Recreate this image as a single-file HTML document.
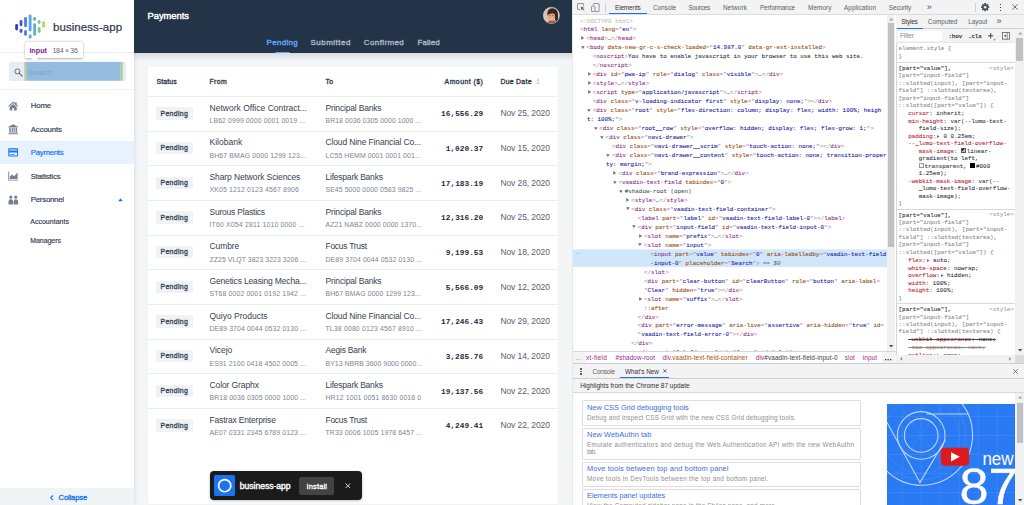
<!DOCTYPE html>
<html lang="en"><head><meta charset="utf-8"><title>business-app</title>
<style>
html,body{margin:0;padding:0;}
html{overflow:hidden;width:1024px;height:505px;}
body{width:1024px;height:505px;overflow:hidden;position:relative;background:#fff;font-family:"Liberation Sans",sans-serif;}
.t{position:absolute;white-space:pre;}
.b{position:absolute;box-sizing:border-box;}
svg{position:absolute;overflow:visible;}
#r{position:absolute;left:0;top:0;width:1024px;height:505px;overflow:hidden;}
</style></head><body><div id="r">
<div class="b" style="left:134px;top:0px;width:438px;height:505px;background:#f3f5f7;"></div>
<div class="b" style="left:134px;top:0px;width:438px;height:53px;background:#233348;"></div>
<span id="t1" class="t" style="top:10px;font:400 9.4px/11px 'Liberation Sans',sans-serif;color:#ffffff;left:147.50px;letter-spacing:-0.023px;-webkit-text-stroke:0.42px #ffffff;">Payments</span>
<svg style="left:542.6px;top:6.5px" width="16.8" height="16.8" viewBox="0 0 16.8 16.8">
<defs><clipPath id="av"><circle cx="8.4" cy="8.4" r="8.2"/></clipPath></defs>
<g clip-path="url(#av)">
<rect width="16.8" height="16.8" fill="#dcc2b5"/>
<path d="M4.2 16.8 Q5 13 9 13.2 Q13.4 13 14.6 16.8Z" fill="#a54d30"/>
<path d="M4.4 8.6 Q3.6 1.6 9.4 1.2 Q15 1.4 15 8 L15.2 13.4 Q13.6 15 12.2 13.2 L11.6 7 Q8 4.6 5.4 8 Z" fill="#3a2621"/>
<path d="M5 8.4 Q5 5.6 8.2 5.4 Q11.8 5.4 12 8.6 Q12 12.4 10 13.9 Q8.4 14.8 6.8 13.6 Q5 11.8 5 8.4Z" fill="#dba583"/>
<path d="M4.6 7.6 Q6.4 3.8 10.4 4.6 Q12.6 5.2 12.4 8 Q10.6 5.8 8.6 6.4 Q6.2 6.8 4.6 7.6Z" fill="#3a2621"/>
<path d="M6.7 11.1 Q8.5 12.7 10.3 11 Q8.5 11.7 6.7 11.1Z" fill="#fff"/>
<path d="M6.4 8.6h1.3v0.5H6.4z M9.3 8.6h1.3v0.5H9.3z" fill="#4a2f26"/>
</g>
<circle cx="8.4" cy="8.4" r="8.1" fill="none" stroke="#e2cfc5" stroke-width="0.5"/>
</svg>
<div class="b" style="left:134px;top:53px;width:438px;height:8px;background:linear-gradient(rgba(35,51,72,.13),rgba(35,51,72,0));"></div>
<span id="t2" class="t" style="top:38px;font:400 8.0px/9px 'Liberation Sans',sans-serif;color:#62a3ff;left:266.60px;letter-spacing:0.277px;-webkit-text-stroke:0.36px #62a3ff;">Pending</span>
<span id="t3" class="t" style="top:38px;font:400 8.0px/9px 'Liberation Sans',sans-serif;color:#aeb8c6;left:310.50px;letter-spacing:0.485px;-webkit-text-stroke:0.36px #aeb8c6;">Submitted</span>
<span id="t4" class="t" style="top:38px;font:400 8.0px/9px 'Liberation Sans',sans-serif;color:#aeb8c6;left:363.80px;letter-spacing:0.388px;-webkit-text-stroke:0.36px #aeb8c6;">Confirmed</span>
<span id="t5" class="t" style="top:38px;font:400 8.0px/9px 'Liberation Sans',sans-serif;color:#aeb8c6;left:417.50px;letter-spacing:0.084px;-webkit-text-stroke:0.36px #aeb8c6;">Failed</span>
<div class="b" style="left:274.6px;top:51.6px;width:15.2px;height:1.4px;background:#62a3ff;border-radius:1px 1px 0 0;"></div>
<svg style="left:0;top:0" width="572" height="505" viewBox="0 0 572 505"><rect x="147.6" y="66.3" width="410.8" height="438" rx="1.6" fill="#fff" stroke="#e9ecef" stroke-width="0.5"/></svg>
<span id="t6" class="t" style="top:78px;font:400 6.9px/7px 'Liberation Sans',sans-serif;color:#2b3749;left:156.50px;letter-spacing:0.126px;-webkit-text-stroke:0.31px #2b3749;">Status</span>
<span id="t7" class="t" style="top:78px;font:400 6.9px/7px 'Liberation Sans',sans-serif;color:#2b3749;left:209.50px;letter-spacing:0.355px;-webkit-text-stroke:0.31px #2b3749;">From</span>
<span id="t8" class="t" style="top:78px;font:400 6.9px/7px 'Liberation Sans',sans-serif;color:#2b3749;left:325.50px;letter-spacing:0.259px;-webkit-text-stroke:0.31px #2b3749;">To</span>
<span id="t9" class="t" style="top:78px;font:400 6.9px/7px 'Liberation Sans',sans-serif;color:#2b3749;right:540.80px;letter-spacing:0.451px;-webkit-text-stroke:0.31px #2b3749;">Amount ($)</span>
<span id="t10" class="t" style="top:78px;font:400 6.9px/7px 'Liberation Sans',sans-serif;color:#2b3749;left:500.40px;letter-spacing:0.284px;-webkit-text-stroke:0.31px #2b3749;">Due Date</span>
<svg style="left:536.4px;top:78px" width="4" height="7" viewBox="0 0 4 7"><path d="M0.3 2.8 L2 0.6 L3.7 2.8Z M0.3 4.2 L2 6.4 L3.7 4.2Z" fill="#c3c9d2"/></svg>
<div class="b" style="left:148px;top:96.0px;width:410px;height:0.6px;background:#eceef1;"></div>
<div class="b" style="left:156.2px;top:107.2px;width:36.4px;height:12.6px;background:#f0f2f5;border-radius:2px;"></div>
<span id="t11" class="t" style="top:110px;font:400 6.9px/7px 'Liberation Sans',sans-serif;color:#3a4657;left:160.50px;letter-spacing:0.329px;-webkit-text-stroke:0.31px #3a4657;">Pending</span>
<span id="t12" class="t" style="top:103px;font:400 8.5px/10px 'Liberation Sans',sans-serif;color:#36424f;left:209.50px;letter-spacing:0.013px;">Network Office Contract...</span>
<span id="t13" class="t" style="top:117px;font:400 6.9px/7px 'Liberation Sans',sans-serif;color:#7b8591;left:209.50px;letter-spacing:0.109px;">LB62 0999 0000 0001 0019 ...</span>
<span id="t14" class="t" style="top:103px;font:400 8.5px/10px 'Liberation Sans',sans-serif;color:#36424f;left:325.50px;letter-spacing:-0.180px;">Principal Banks</span>
<span id="t15" class="t" style="top:117px;font:400 6.9px/7px 'Liberation Sans',sans-serif;color:#7b8591;left:325.50px;letter-spacing:0.069px;">BR18 0036 0305 0000 1000 ...</span>
<span id="t16" class="t" style="top:110px;font:700 7.8px/8px 'Liberation Mono',monospace;color:#1f2b3d;right:540.80px;letter-spacing:-0.001px;">16,556.29</span>
<span id="t17" class="t" style="top:108px;font:400 8.5px/10px 'Liberation Sans',sans-serif;color:#56616f;left:500.40px;letter-spacing:-0.090px;">Nov 25, 2020</span>
<div class="b" style="left:148px;top:130.67px;width:410px;height:0.6px;background:#ebeef1;"></div>
<div class="b" style="left:156.2px;top:141.87px;width:36.4px;height:12.6px;background:#f0f2f5;border-radius:2px;"></div>
<span id="t18" class="t" style="top:144px;font:400 6.9px/7px 'Liberation Sans',sans-serif;color:#3a4657;left:160.50px;letter-spacing:0.329px;-webkit-text-stroke:0.31px #3a4657;">Pending</span>
<span id="t19" class="t" style="top:137px;font:400 8.5px/10px 'Liberation Sans',sans-serif;color:#36424f;left:209.50px;letter-spacing:0.011px;">Kilobank</span>
<span id="t20" class="t" style="top:152px;font:400 6.9px/7px 'Liberation Sans',sans-serif;color:#7b8591;left:209.50px;letter-spacing:0.139px;">BH67 BMAG 0000 1299 123...</span>
<span id="t21" class="t" style="top:137px;font:400 8.5px/10px 'Liberation Sans',sans-serif;color:#36424f;left:325.50px;letter-spacing:-0.129px;">Cloud Nine Financial Co...</span>
<span id="t22" class="t" style="top:152px;font:400 6.9px/7px 'Liberation Sans',sans-serif;color:#7b8591;left:325.50px;letter-spacing:0.089px;">LC55 HEMM 0001 0001 001...</span>
<span id="t23" class="t" style="top:145px;font:700 7.8px/8px 'Liberation Mono',monospace;color:#1f2b3d;right:540.80px;letter-spacing:0.000px;">1,020.37</span>
<span id="t24" class="t" style="top:143px;font:400 8.5px/10px 'Liberation Sans',sans-serif;color:#56616f;left:500.40px;letter-spacing:-0.090px;">Nov 15, 2020</span>
<div class="b" style="left:148px;top:165.33999999999997px;width:410px;height:0.6px;background:#ebeef1;"></div>
<div class="b" style="left:156.2px;top:176.54px;width:36.4px;height:12.6px;background:#f0f2f5;border-radius:2px;"></div>
<span id="t25" class="t" style="top:179px;font:400 6.9px/7px 'Liberation Sans',sans-serif;color:#3a4657;left:160.50px;letter-spacing:0.329px;-webkit-text-stroke:0.31px #3a4657;">Pending</span>
<span id="t26" class="t" style="top:172px;font:400 8.5px/10px 'Liberation Sans',sans-serif;color:#36424f;left:209.50px;letter-spacing:-0.108px;">Sharp Network Sciences</span>
<span id="t27" class="t" style="top:186px;font:400 6.9px/7px 'Liberation Sans',sans-serif;color:#7b8591;left:209.50px;letter-spacing:0.148px;">XK05 1212 0123 4567 8906</span>
<span id="t28" class="t" style="top:172px;font:400 8.5px/10px 'Liberation Sans',sans-serif;color:#36424f;left:325.50px;letter-spacing:-0.219px;">Lifespark Banks</span>
<span id="t29" class="t" style="top:186px;font:400 6.9px/7px 'Liberation Sans',sans-serif;color:#7b8591;left:325.50px;letter-spacing:0.082px;">SE45 5000 0000 0583 9825 ...</span>
<span id="t30" class="t" style="top:180px;font:700 7.8px/8px 'Liberation Mono',monospace;color:#1f2b3d;right:540.80px;letter-spacing:-0.001px;">17,183.19</span>
<span id="t31" class="t" style="top:178px;font:400 8.5px/10px 'Liberation Sans',sans-serif;color:#56616f;left:500.40px;letter-spacing:-0.090px;">Nov 28, 2020</span>
<div class="b" style="left:148px;top:200.01px;width:410px;height:0.6px;background:#ebeef1;"></div>
<div class="b" style="left:156.2px;top:211.21px;width:36.4px;height:12.6px;background:#f0f2f5;border-radius:2px;"></div>
<span id="t32" class="t" style="top:214px;font:400 6.9px/7px 'Liberation Sans',sans-serif;color:#3a4657;left:160.50px;letter-spacing:0.329px;-webkit-text-stroke:0.31px #3a4657;">Pending</span>
<span id="t33" class="t" style="top:207px;font:400 8.5px/10px 'Liberation Sans',sans-serif;color:#36424f;left:209.50px;letter-spacing:-0.213px;">Surous Plastics</span>
<span id="t34" class="t" style="top:221px;font:400 6.9px/7px 'Liberation Sans',sans-serif;color:#7b8591;left:209.50px;letter-spacing:0.169px;">IT60 X054 2811 1010 0000 ...</span>
<span id="t35" class="t" style="top:207px;font:400 8.5px/10px 'Liberation Sans',sans-serif;color:#36424f;left:325.50px;letter-spacing:-0.180px;">Principal Banks</span>
<span id="t36" class="t" style="top:221px;font:400 6.9px/7px 'Liberation Sans',sans-serif;color:#7b8591;left:325.50px;letter-spacing:0.091px;">AZ21 NABZ 0000 0000 1370...</span>
<span id="t37" class="t" style="top:214px;font:700 7.8px/8px 'Liberation Mono',monospace;color:#1f2b3d;right:540.80px;letter-spacing:-0.001px;">12,316.20</span>
<span id="t38" class="t" style="top:212px;font:400 8.5px/10px 'Liberation Sans',sans-serif;color:#56616f;left:500.40px;letter-spacing:-0.090px;">Nov 25, 2020</span>
<div class="b" style="left:148px;top:234.68px;width:410px;height:0.6px;background:#ebeef1;"></div>
<div class="b" style="left:156.2px;top:245.88000000000002px;width:36.4px;height:12.6px;background:#f0f2f5;border-radius:2px;"></div>
<span id="t39" class="t" style="top:248px;font:400 6.9px/7px 'Liberation Sans',sans-serif;color:#3a4657;left:160.50px;letter-spacing:0.329px;-webkit-text-stroke:0.31px #3a4657;">Pending</span>
<span id="t40" class="t" style="top:241px;font:400 8.5px/10px 'Liberation Sans',sans-serif;color:#36424f;left:209.50px;letter-spacing:-0.089px;">Cumbre</span>
<span id="t41" class="t" style="top:256px;font:400 6.9px/7px 'Liberation Sans',sans-serif;color:#7b8591;left:209.50px;letter-spacing:0.051px;">ZZ25 VLQT 3823 3223 3206 ...</span>
<span id="t42" class="t" style="top:241px;font:400 8.5px/10px 'Liberation Sans',sans-serif;color:#36424f;left:325.50px;letter-spacing:-0.282px;">Focus Trust</span>
<span id="t43" class="t" style="top:256px;font:400 6.9px/7px 'Liberation Sans',sans-serif;color:#7b8591;left:325.50px;letter-spacing:0.101px;">DE89 3704 0044 0532 0130 ...</span>
<span id="t44" class="t" style="top:249px;font:700 7.8px/8px 'Liberation Mono',monospace;color:#1f2b3d;right:540.80px;letter-spacing:0.000px;">9,199.53</span>
<span id="t45" class="t" style="top:247px;font:400 8.5px/10px 'Liberation Sans',sans-serif;color:#56616f;left:500.40px;letter-spacing:-0.090px;">Nov 18, 2020</span>
<div class="b" style="left:148px;top:269.35px;width:410px;height:0.6px;background:#ebeef1;"></div>
<div class="b" style="left:156.2px;top:280.55px;width:36.4px;height:12.6px;background:#f0f2f5;border-radius:2px;"></div>
<span id="t46" class="t" style="top:283px;font:400 6.9px/7px 'Liberation Sans',sans-serif;color:#3a4657;left:160.50px;letter-spacing:0.329px;-webkit-text-stroke:0.31px #3a4657;">Pending</span>
<span id="t47" class="t" style="top:276px;font:400 8.5px/10px 'Liberation Sans',sans-serif;color:#36424f;left:209.50px;letter-spacing:-0.158px;">Genetics Leasing Mecha...</span>
<span id="t48" class="t" style="top:290px;font:400 6.9px/7px 'Liberation Sans',sans-serif;color:#7b8591;left:209.50px;letter-spacing:0.128px;">ST68 0002 0001 0192 1942 ...</span>
<span id="t49" class="t" style="top:276px;font:400 8.5px/10px 'Liberation Sans',sans-serif;color:#36424f;left:325.50px;letter-spacing:-0.180px;">Principal Banks</span>
<span id="t50" class="t" style="top:290px;font:400 6.9px/7px 'Liberation Sans',sans-serif;color:#7b8591;left:325.50px;letter-spacing:0.089px;">BH67 BMAG 0000 1299 123...</span>
<span id="t51" class="t" style="top:284px;font:700 7.8px/8px 'Liberation Mono',monospace;color:#1f2b3d;right:540.80px;letter-spacing:0.000px;">5,566.09</span>
<span id="t52" class="t" style="top:282px;font:400 8.5px/10px 'Liberation Sans',sans-serif;color:#56616f;left:500.40px;letter-spacing:-0.090px;">Nov 12, 2020</span>
<div class="b" style="left:148px;top:304.02px;width:410px;height:0.6px;background:#ebeef1;"></div>
<div class="b" style="left:156.2px;top:315.21999999999997px;width:36.4px;height:12.6px;background:#f0f2f5;border-radius:2px;"></div>
<span id="t53" class="t" style="top:318px;font:400 6.9px/7px 'Liberation Sans',sans-serif;color:#3a4657;left:160.50px;letter-spacing:0.329px;-webkit-text-stroke:0.31px #3a4657;">Pending</span>
<span id="t54" class="t" style="top:311px;font:400 8.5px/10px 'Liberation Sans',sans-serif;color:#36424f;left:209.50px;letter-spacing:-0.009px;">Quiyo Products</span>
<span id="t55" class="t" style="top:325px;font:400 6.9px/7px 'Liberation Sans',sans-serif;color:#7b8591;left:209.50px;letter-spacing:0.101px;">DE89 3704 0044 0532 0130 ...</span>
<span id="t56" class="t" style="top:311px;font:400 8.5px/10px 'Liberation Sans',sans-serif;color:#36424f;left:325.50px;letter-spacing:-0.129px;">Cloud Nine Financial Co...</span>
<span id="t57" class="t" style="top:325px;font:400 6.9px/7px 'Liberation Sans',sans-serif;color:#7b8591;left:325.50px;letter-spacing:0.156px;">TL38 0080 0123 4567 8910 ...</span>
<span id="t58" class="t" style="top:318px;font:700 7.8px/8px 'Liberation Mono',monospace;color:#1f2b3d;right:540.80px;letter-spacing:-0.001px;">17,246.43</span>
<span id="t59" class="t" style="top:316px;font:400 8.5px/10px 'Liberation Sans',sans-serif;color:#56616f;left:500.40px;letter-spacing:-0.090px;">Nov 29, 2020</span>
<div class="b" style="left:148px;top:338.69px;width:410px;height:0.6px;background:#ebeef1;"></div>
<div class="b" style="left:156.2px;top:349.89px;width:36.4px;height:12.6px;background:#f0f2f5;border-radius:2px;"></div>
<span id="t60" class="t" style="top:352px;font:400 6.9px/7px 'Liberation Sans',sans-serif;color:#3a4657;left:160.50px;letter-spacing:0.329px;-webkit-text-stroke:0.31px #3a4657;">Pending</span>
<span id="t61" class="t" style="top:345px;font:400 8.5px/10px 'Liberation Sans',sans-serif;color:#36424f;left:209.50px;letter-spacing:-0.033px;">Vicejo</span>
<span id="t62" class="t" style="top:360px;font:400 6.9px/7px 'Liberation Sans',sans-serif;color:#7b8591;left:209.50px;letter-spacing:0.114px;">ES91 2100 0418 4502 0005 ...</span>
<span id="t63" class="t" style="top:345px;font:400 8.5px/10px 'Liberation Sans',sans-serif;color:#36424f;left:325.50px;letter-spacing:-0.220px;">Aegis Bank</span>
<span id="t64" class="t" style="top:360px;font:400 6.9px/7px 'Liberation Sans',sans-serif;color:#7b8591;left:325.50px;letter-spacing:0.048px;">BY13 NBRB 3600 9000 0000...</span>
<span id="t65" class="t" style="top:353px;font:700 7.8px/8px 'Liberation Mono',monospace;color:#1f2b3d;right:540.80px;letter-spacing:0.000px;">3,285.76</span>
<span id="t66" class="t" style="top:351px;font:400 8.5px/10px 'Liberation Sans',sans-serif;color:#56616f;left:500.40px;letter-spacing:-0.090px;">Nov 14, 2020</span>
<div class="b" style="left:148px;top:373.36px;width:410px;height:0.6px;background:#ebeef1;"></div>
<div class="b" style="left:156.2px;top:384.56px;width:36.4px;height:12.6px;background:#f0f2f5;border-radius:2px;"></div>
<span id="t67" class="t" style="top:387px;font:400 6.9px/7px 'Liberation Sans',sans-serif;color:#3a4657;left:160.50px;letter-spacing:0.329px;-webkit-text-stroke:0.31px #3a4657;">Pending</span>
<span id="t68" class="t" style="top:380px;font:400 8.5px/10px 'Liberation Sans',sans-serif;color:#36424f;left:209.50px;letter-spacing:-0.097px;">Color Graphx</span>
<span id="t69" class="t" style="top:394px;font:400 6.9px/7px 'Liberation Sans',sans-serif;color:#7b8591;left:209.50px;letter-spacing:0.101px;">BR18 0036 0305 0000 1000 ...</span>
<span id="t70" class="t" style="top:380px;font:400 8.5px/10px 'Liberation Sans',sans-serif;color:#36424f;left:325.50px;letter-spacing:-0.219px;">Lifespark Banks</span>
<span id="t71" class="t" style="top:394px;font:400 6.9px/7px 'Liberation Sans',sans-serif;color:#7b8591;left:325.50px;letter-spacing:0.133px;">HR12 1001 0051 8630 0016 0</span>
<span id="t72" class="t" style="top:388px;font:700 7.8px/8px 'Liberation Mono',monospace;color:#1f2b3d;right:540.80px;letter-spacing:-0.001px;">19,137.56</span>
<span id="t73" class="t" style="top:386px;font:400 8.5px/10px 'Liberation Sans',sans-serif;color:#56616f;left:500.40px;letter-spacing:-0.090px;">Nov 22, 2020</span>
<div class="b" style="left:148px;top:408.03000000000003px;width:410px;height:0.6px;background:#ebeef1;"></div>
<div class="b" style="left:156.2px;top:419.23px;width:36.4px;height:12.6px;background:#f0f2f5;border-radius:2px;"></div>
<span id="t74" class="t" style="top:422px;font:400 6.9px/7px 'Liberation Sans',sans-serif;color:#3a4657;left:160.50px;letter-spacing:0.329px;-webkit-text-stroke:0.31px #3a4657;">Pending</span>
<span id="t75" class="t" style="top:415px;font:400 8.5px/10px 'Liberation Sans',sans-serif;color:#36424f;left:209.50px;letter-spacing:-0.181px;">Fastrax Enterprise</span>
<span id="t76" class="t" style="top:429px;font:400 6.9px/7px 'Liberation Sans',sans-serif;color:#7b8591;left:209.50px;letter-spacing:0.114px;">AE07 0331 2345 6789 0123 ...</span>
<span id="t77" class="t" style="top:415px;font:400 8.5px/10px 'Liberation Sans',sans-serif;color:#36424f;left:325.50px;letter-spacing:-0.282px;">Focus Trust</span>
<span id="t78" class="t" style="top:429px;font:400 6.9px/7px 'Liberation Sans',sans-serif;color:#7b8591;left:325.50px;letter-spacing:0.115px;">TR33 0006 1005 1978 6457 ...</span>
<span id="t79" class="t" style="top:422px;font:700 7.8px/8px 'Liberation Mono',monospace;color:#1f2b3d;right:540.80px;letter-spacing:0.000px;">4,249.41</span>
<span id="t80" class="t" style="top:420px;font:400 8.5px/10px 'Liberation Sans',sans-serif;color:#56616f;left:500.40px;letter-spacing:-0.090px;">Nov 22, 2020</span>
<div class="b" style="left:209.6px;top:471px;width:152.4px;height:29.4px;background:#1b1b1b;border-radius:4px;box-shadow:0 1px 3px rgba(0,0,0,.25);"></div>
<div class="b" style="left:213.9px;top:475.2px;width:21.4px;height:21.3px;background:#1a73f0;border-radius:1.5px;"></div>
<svg style="left:213.9px;top:475.2px" width="21.4" height="21.3" viewBox="0 0 21.4 21.3"><circle cx="10.7" cy="10.65" r="6.1" fill="none" stroke="#fff" stroke-width="1.7"/></svg>
<span id="t81" class="t" style="top:481px;font:400 8.6px/10px 'Liberation Sans',sans-serif;color:#ffffff;left:239.80px;letter-spacing:-0.027px;-webkit-text-stroke:0.39px #ffffff;">business-app</span>
<div class="b" style="left:299.2px;top:477px;width:35.2px;height:18px;background:#434343;border-radius:2px;"></div>
<span id="t82" class="t" style="top:482px;font:400 7.4px/9px 'Liberation Sans',sans-serif;color:#ffffff;left:306.50px;letter-spacing:0.184px;-webkit-text-stroke:0.33px #ffffff;">Install</span>
<svg style="left:344.6px;top:483.4px" width="5.6" height="5.6" viewBox="0 0 5.6 5.6"><path d="M0.5 0.5 L5.1 5.1 M5.1 0.5 L0.5 5.1" stroke="#e8e8e8" stroke-width="0.9" fill="none"/></svg>
<div class="b" style="left:0px;top:0px;width:134px;height:505px;background:#ffffff;box-shadow:0.5px 0 3.5px rgba(30,50,80,.16);"></div>
<svg style="left:0;top:0" width="60" height="50" viewBox="0 0 60 50"><rect x="15.20" y="24.00" width="2.85" height="6.50" rx="1.42" fill="#4036b6"/><rect x="19.60" y="20.10" width="2.85" height="6.10" rx="1.42" fill="#4559d0"/><rect x="19.60" y="28.70" width="2.85" height="4.20" rx="1.42" fill="#4559d0"/><rect x="24.10" y="17.10" width="2.85" height="10.10" rx="1.42" fill="#4a80e6"/><rect x="24.10" y="30.10" width="2.85" height="5.70" rx="1.42" fill="#4a80e6"/><rect x="28.70" y="14.40" width="2.85" height="17.10" rx="1.42" fill="#57a5fa"/><rect x="28.70" y="34.40" width="2.85" height="4.20" rx="1.42" fill="#57a5fa"/><rect x="33.20" y="17.10" width="2.85" height="3.70" rx="1.42" fill="#5db1c4"/><rect x="33.20" y="23.30" width="2.85" height="12.50" rx="1.42" fill="#5db1c4"/><rect x="37.70" y="20.10" width="2.85" height="3.90" rx="1.42" fill="#7bca8d"/><rect x="37.70" y="26.90" width="2.85" height="6.00" rx="1.42" fill="#7bca8d"/><rect x="42.20" y="21.20" width="2.85" height="6.40" rx="1.42" fill="#a4e25a"/></svg>
<span id="t83" class="t" style="top:21px;font:400 11.5px/12px 'Liberation Sans',sans-serif;color:#2c3a4c;left:53.00px;letter-spacing:0.066px;-webkit-text-stroke:0.22px #2c3a4c;">business-app</span>
<div class="b" style="left:0px;top:52px;width:134px;height:0.7px;background:#eef1f4;"></div>
<div class="b" style="left:8.5px;top:62px;width:117px;height:19px;background:#e8ebef;border-radius:2px;"></div>
<svg style="left:13.6px;top:67.6px" width="9" height="9" viewBox="0 0 9 9"><circle cx="3.4" cy="3.4" r="2.5" fill="none" stroke="#5d6a7a" stroke-width="0.95"/><path d="M5.3 5.3 L8.2 8.2" stroke="#5d6a7a" stroke-width="1.1" stroke-linecap="round"/></svg>
<svg style="left:0;top:0" width="134" height="90" viewBox="0 0 134 90"><rect x="24.4" y="61.9" width="2.4" height="18.8" fill="#abce9e"/><rect x="26.7" y="61.9" width="93.7" height="18.8" fill="#95bbe1"/><rect x="120.3" y="61.9" width="2.4" height="18.8" fill="#abce9e"/></svg>
<span id="t84" class="t" style="top:68px;font:400 7.6px/9px 'Liberation Sans',sans-serif;color:#7fa2cc;left:27.20px;letter-spacing:0.090px;">Search</span>
<div class="b" style="left:0px;top:89px;width:134px;height:0.7px;background:#eef1f4;"></div>
<div class="b" style="left:25px;top:42px;width:57.6px;height:16px;background:#ffffff;border-radius:1.5px;box-shadow:0 0.5px 2.5px rgba(0,0,0,.33);"></div>
<svg style="left:31.4px;top:57.8px" width="7" height="4" viewBox="0 0 7 4"><path d="M0 0 L3.5 3.4 L7 0Z" fill="#fff"/><path d="M0 0.2 L3.5 3.5 L7 0.2" fill="none" stroke="rgba(0,0,0,.12)" stroke-width="0.4"/></svg>
<span id="t85" class="t" style="top:46px;font:700 7.2px/9px 'Liberation Sans',sans-serif;color:#881280;left:29.40px;letter-spacing:-0.013px;">input</span>
<span id="t86" class="t" style="top:47px;font:400 7.0px/7px 'Liberation Sans',sans-serif;color:#666666;left:52.50px;letter-spacing:-0.307px;">184 × 36</span>
<div class="b" style="left:0px;top:140.9px;width:134px;height:23.3px;background:#e8f1fe;"></div>
<span id="t87" class="t" style="top:101px;font:400 7.8px/9px 'Liberation Sans',sans-serif;color:#364254;left:30.80px;letter-spacing:-0.128px;-webkit-text-stroke:0.20px #364254;">Home</span>
<span id="t88" class="t" style="top:125px;font:400 7.8px/9px 'Liberation Sans',sans-serif;color:#364254;left:30.80px;letter-spacing:-0.135px;-webkit-text-stroke:0.20px #364254;">Accounts</span>
<span id="t89" class="t" style="top:148px;font:400 7.8px/9px 'Liberation Sans',sans-serif;color:#1676f3;left:30.80px;letter-spacing:-0.259px;-webkit-text-stroke:0.20px #1676f3;">Payments</span>
<span id="t90" class="t" style="top:172px;font:400 7.8px/9px 'Liberation Sans',sans-serif;color:#364254;left:30.80px;letter-spacing:-0.160px;-webkit-text-stroke:0.20px #364254;">Statistics</span>
<span id="t91" class="t" style="top:195px;font:400 7.8px/9px 'Liberation Sans',sans-serif;color:#364254;left:30.80px;letter-spacing:-0.234px;-webkit-text-stroke:0.20px #364254;">Personnel</span>
<span id="t92" class="t" style="top:218px;font:400 7px/7px 'Liberation Sans',sans-serif;color:#364254;left:30.20px;letter-spacing:0.024px;-webkit-text-stroke:0.18px #364254;">Accountants</span>
<span id="t93" class="t" style="top:237px;font:400 7px/7px 'Liberation Sans',sans-serif;color:#364254;left:30.20px;letter-spacing:-0.055px;-webkit-text-stroke:0.18px #364254;">Managers</span>
<svg style="left:8.2px;top:100.6px" width="10.4" height="10" viewBox="0 0 10.4 10"><path d="M5.2 0.6 L0.3 5 L1.1 5.7 L5.2 2.1 L9.3 5.7 L10.1 5 L8.6 3.6 L8.6 1.1 L7.3 1.1 L7.3 2.5 Z" fill="#758190"/><path d="M5.2 2.9 L1.7 6 L1.7 9.6 L4.3 9.6 L4.3 7 L6.1 7 L6.1 9.6 L8.7 9.6 L8.7 6 Z" fill="#758190"/></svg>
<svg style="left:8.2px;top:124px" width="10.4" height="10.4" viewBox="0 0 10.4 10.4"><path d="M5.2 0.3 L0.4 2.7 L0.4 3.5 L10 3.5 L10 2.7 Z" fill="#758190"/><path d="M1.3 4.1h1.5v4H1.3z M3.7 4.1h1.2v4H3.7z M5.6 4.1h1.2v4H5.6z M7.6 4.1h1.5v4H7.6z" fill="#758190"/><path d="M0.9 8.5h8.6v0.7H0.9z M0.3 9.5h9.8v0.8H0.3z" fill="#758190"/></svg>
<svg style="left:8.2px;top:148.2px" width="10.4" height="8.8" viewBox="0 0 10.4 8.8"><path d="M1 0.3 H9.4 Q10.1 0.3 10.1 1 V7.8 Q10.1 8.5 9.4 8.5 H1 Q0.3 8.5 0.3 7.8 V1 Q0.3 0.3 1 0.3Z M1.3 1.5 V2.6 H9.1 V1.5Z M1.3 4.4 V7.4 H9.1 V4.4Z" fill="#1676f3" fill-rule="evenodd"/><path d="M2 6.1h1.6v0.7H2z M4.2 6.1h2.4v0.7H4.2z" fill="#1676f3"/></svg>
<svg style="left:8.2px;top:171.4px" width="10.6" height="9.6" viewBox="0 0 10.6 9.6"><path d="M0.3 0.6h0.9v8.1h9.1v0.8H0.3z" fill="#758190"/><path d="M1.8 8.1 L1.8 5.6 L4 3.6 L6 5.2 L9.6 1.6 L9.6 8.1Z" fill="#758190"/></svg>
<svg style="left:8.2px;top:194.6px" width="10.6" height="10" viewBox="0 0 10.6 10"><circle cx="2.8" cy="2.1" r="1.6" fill="#758190"/><circle cx="7.8" cy="2.1" r="1.6" fill="#758190"/><path d="M0.5 9.6 V6.4 Q0.5 4.3 2.8 4.3 Q5.1 4.3 5.1 6.4 V9.6Z M5.6 9.6 V6.4 Q5.6 4.3 7.8 4.3 Q10.1 4.3 10.1 6.4 V9.6Z" fill="#758190"/></svg>
<svg style="left:118.1px;top:198.1px" width="5" height="3.5" viewBox="0 0 4 3"><path d="M0 2.8 L2 0.2 L4 2.8Z" fill="#1676f3"/></svg>
<div class="b" style="left:0px;top:488px;width:134px;height:17px;background:#f1f4f7;"></div>
<svg style="left:49.8px;top:494.6px" width="3.6" height="5.6" viewBox="0 0 3.6 5.6"><path d="M3 0.5 L0.7 2.8 L3 5.1" stroke="#1676f3" stroke-width="1.1" fill="none"/></svg>
<span id="t94" class="t" style="top:493px;font:400 7.5px/9px 'Liberation Sans',sans-serif;color:#1676f3;left:58.60px;letter-spacing:-0.098px;-webkit-text-stroke:0.34px #1676f3;">Collapse</span>
<div class="b" style="left:572px;top:0px;width:452px;height:505px;background:#ffffff;"></div>
<svg style="left:572px;top:249px" width="315.4" height="18" viewBox="0 0 315.4 18"><rect x="0" y="0.4" width="315.4" height="17.5" fill="#d0e6fb"/></svg>
<span id="t95" class="t" style="top:18px;font:400 5.86px/7px 'Liberation Mono',monospace;color:#303942;left:580.00px;-webkit-text-stroke:0.09px;"><span style="color:#bdbdbd;">&lt;!DOCTYPE html&gt;</span></span>
<span id="t96" class="t" style="top:26px;font:400 5.86px/7px 'Liberation Mono',monospace;color:#303942;left:580.00px;-webkit-text-stroke:0.09px;"><span style="color:#a894a6;">&lt;</span><span style="color:#8f2d88;">html</span> <span style="color:#9a4a0c;">lang</span><span style="color:#a894a6;">=</span><span style="color:#a894a6;">"</span><span style="color:#2222a8;">en</span><span style="color:#a894a6;">"</span><span style="color:#a894a6;">&gt;</span></span>
<span id="t97" class="t" style="top:35px;font:400 5.86px/7px 'Liberation Mono',monospace;color:#303942;left:586.40px;-webkit-text-stroke:0.09px;"><span style="color:#a894a6;">&lt;</span><span style="color:#8f2d88;">head</span><span style="color:#a894a6;">&gt;</span><span style="color:#303942;">…</span><span style="color:#a894a6;">&lt;/</span><span style="color:#8f2d88;">head</span><span style="color:#a894a6;">&gt;</span></span>
<svg style="left:581.20px;top:36.44px" width="3.4" height="3.8" viewBox="0 0 3.4 3.8"><path d="M0.2 0.1 L3.2 1.9 L0.2 3.7Z" fill="#6e6e6e"/></svg>
<span id="t98" class="t" style="top:44px;font:400 5.86px/7px 'Liberation Mono',monospace;color:#303942;left:586.40px;-webkit-text-stroke:0.09px;"><span style="color:#a894a6;">&lt;</span><span style="color:#8f2d88;">body</span> <span style="color:#9a4a0c;">data-new-gr-c-s-check-loaded</span><span style="color:#a894a6;">=</span><span style="color:#a894a6;">"</span><span style="color:#2222a8;">14.987.0</span><span style="color:#a894a6;">"</span> <span style="color:#9a4a0c;">data-gr-ext-installed</span><span style="color:#a894a6;">&gt;</span></span>
<svg style="left:580.80px;top:46.01px" width="3.8" height="3.2" viewBox="0 0 3.8 3.2"><path d="M0.1 0.2 L3.7 0.2 L1.9 3.1Z" fill="#6e6e6e"/></svg>
<span id="t99" class="t" style="top:53px;font:400 5.86px/7px 'Liberation Mono',monospace;color:#303942;left:592.80px;-webkit-text-stroke:0.09px;"><span style="color:#a894a6;">&lt;</span><span style="color:#8f2d88;">noscript</span><span style="color:#a894a6;">&gt;</span><span style="color:#303942;">You have to enable javascript in your browser to use this web site.</span></span>
<span id="t100" class="t" style="top:62px;font:400 5.86px/7px 'Liberation Mono',monospace;color:#303942;left:592.80px;-webkit-text-stroke:0.09px;"><span style="color:#a894a6;">&lt;/</span><span style="color:#8f2d88;">noscript</span><span style="color:#a894a6;">&gt;</span></span>
<span id="t101" class="t" style="top:71px;font:400 5.86px/7px 'Liberation Mono',monospace;color:#303942;left:592.80px;-webkit-text-stroke:0.09px;"><span style="color:#a894a6;">&lt;</span><span style="color:#8f2d88;">div</span> <span style="color:#9a4a0c;">id</span><span style="color:#a894a6;">=</span><span style="color:#a894a6;">"</span><span style="color:#2222a8;">pwa-ip</span><span style="color:#a894a6;">"</span> <span style="color:#9a4a0c;">role</span><span style="color:#a894a6;">=</span><span style="color:#a894a6;">"</span><span style="color:#2222a8;">dialog</span><span style="color:#a894a6;">"</span> <span style="color:#9a4a0c;">class</span><span style="color:#a894a6;">=</span><span style="color:#a894a6;">"</span><span style="color:#2222a8;">visible</span><span style="color:#a894a6;">"</span><span style="color:#a894a6;">&gt;</span><span style="color:#303942;">…</span><span style="color:#a894a6;">&lt;/</span><span style="color:#8f2d88;">div</span><span style="color:#a894a6;">&gt;</span></span>
<svg style="left:587.60px;top:72.32px" width="3.4" height="3.8" viewBox="0 0 3.4 3.8"><path d="M0.2 0.1 L3.2 1.9 L0.2 3.7Z" fill="#6e6e6e"/></svg>
<span id="t102" class="t" style="top:80px;font:400 5.86px/7px 'Liberation Mono',monospace;color:#303942;left:592.80px;-webkit-text-stroke:0.09px;"><span style="color:#a894a6;">&lt;</span><span style="color:#8f2d88;">style</span><span style="color:#a894a6;">&gt;</span><span style="color:#303942;">…</span><span style="color:#a894a6;">&lt;/</span><span style="color:#8f2d88;">style</span><span style="color:#a894a6;">&gt;</span></span>
<svg style="left:587.60px;top:81.29px" width="3.4" height="3.8" viewBox="0 0 3.4 3.8"><path d="M0.2 0.1 L3.2 1.9 L0.2 3.7Z" fill="#6e6e6e"/></svg>
<span id="t103" class="t" style="top:89px;font:400 5.86px/7px 'Liberation Mono',monospace;color:#303942;left:592.80px;-webkit-text-stroke:0.09px;"><span style="color:#a894a6;">&lt;</span><span style="color:#8f2d88;">script</span> <span style="color:#9a4a0c;">type</span><span style="color:#a894a6;">=</span><span style="color:#a894a6;">"</span><span style="color:#2222a8;">application/javascript</span><span style="color:#a894a6;">"</span><span style="color:#a894a6;">&gt;</span><span style="color:#303942;">…</span><span style="color:#a894a6;">&lt;/</span><span style="color:#8f2d88;">script</span><span style="color:#a894a6;">&gt;</span></span>
<svg style="left:587.60px;top:90.26px" width="3.4" height="3.8" viewBox="0 0 3.4 3.8"><path d="M0.2 0.1 L3.2 1.9 L0.2 3.7Z" fill="#6e6e6e"/></svg>
<span id="t104" class="t" style="top:98px;font:400 5.86px/7px 'Liberation Mono',monospace;color:#303942;left:592.80px;-webkit-text-stroke:0.09px;"><span style="color:#a894a6;">&lt;</span><span style="color:#8f2d88;">div</span> <span style="color:#9a4a0c;">class</span><span style="color:#a894a6;">=</span><span style="color:#a894a6;">"</span><span style="color:#2222a8;">v-loading-indicator first</span><span style="color:#a894a6;">"</span> <span style="color:#9a4a0c;">style</span><span style="color:#a894a6;">=</span><span style="color:#a894a6;">"</span><span style="color:#2222a8;">display: none;</span><span style="color:#a894a6;">"</span><span style="color:#a894a6;">&gt;</span><span style="color:#a894a6;">&lt;/</span><span style="color:#8f2d88;">div</span><span style="color:#a894a6;">&gt;</span></span>
<span id="t105" class="t" style="top:107px;font:400 5.86px/7px 'Liberation Mono',monospace;color:#303942;left:592.80px;-webkit-text-stroke:0.09px;"><span style="color:#a894a6;">&lt;</span><span style="color:#8f2d88;">div</span> <span style="color:#9a4a0c;">class</span><span style="color:#a894a6;">=</span><span style="color:#a894a6;">"</span><span style="color:#2222a8;">root</span><span style="color:#a894a6;">"</span> <span style="color:#9a4a0c;">style</span><span style="color:#a894a6;">=</span><span style="color:#a894a6;">"</span><span style="color:#2222a8;">flex-direction: column; display: flex; width: 100%; heigh</span></span>
<svg style="left:587.20px;top:108.80px" width="3.8" height="3.2" viewBox="0 0 3.8 3.2"><path d="M0.1 0.2 L3.7 0.2 L1.9 3.1Z" fill="#6e6e6e"/></svg>
<span id="t106" class="t" style="top:116px;font:400 5.86px/7px 'Liberation Mono',monospace;color:#303942;left:587.00px;-webkit-text-stroke:0.09px;"><span style="color:#2222a8;">t: 100%;</span><span style="color:#a894a6;">"</span><span style="color:#a894a6;">&gt;</span></span>
<span id="t107" class="t" style="top:125px;font:400 5.86px/7px 'Liberation Mono',monospace;color:#303942;left:599.20px;-webkit-text-stroke:0.09px;"><span style="color:#a894a6;">&lt;</span><span style="color:#8f2d88;">div</span> <span style="color:#9a4a0c;">class</span><span style="color:#a894a6;">=</span><span style="color:#a894a6;">"</span><span style="color:#2222a8;">root__row</span><span style="color:#a894a6;">"</span> <span style="color:#9a4a0c;">style</span><span style="color:#a894a6;">=</span><span style="color:#a894a6;">"</span><span style="color:#2222a8;">overflow: hidden; display: flex; flex-grow: 1;</span><span style="color:#a894a6;">"</span><span style="color:#a894a6;">&gt;</span></span>
<svg style="left:593.60px;top:126.74px" width="3.8" height="3.2" viewBox="0 0 3.8 3.2"><path d="M0.1 0.2 L3.7 0.2 L1.9 3.1Z" fill="#6e6e6e"/></svg>
<span id="t108" class="t" style="top:134px;font:400 5.86px/7px 'Liberation Mono',monospace;color:#303942;left:605.60px;-webkit-text-stroke:0.09px;"><span style="color:#a894a6;">&lt;</span><span style="color:#8f2d88;">div</span> <span style="color:#9a4a0c;">class</span><span style="color:#a894a6;">=</span><span style="color:#a894a6;">"</span><span style="color:#2222a8;">navi-drawer</span><span style="color:#a894a6;">"</span><span style="color:#a894a6;">&gt;</span></span>
<svg style="left:600.00px;top:135.71px" width="3.8" height="3.2" viewBox="0 0 3.8 3.2"><path d="M0.1 0.2 L3.7 0.2 L1.9 3.1Z" fill="#6e6e6e"/></svg>
<span id="t109" class="t" style="top:143px;font:400 5.86px/7px 'Liberation Mono',monospace;color:#303942;left:612.00px;-webkit-text-stroke:0.09px;"><span style="color:#a894a6;">&lt;</span><span style="color:#8f2d88;">div</span> <span style="color:#9a4a0c;">class</span><span style="color:#a894a6;">=</span><span style="color:#a894a6;">"</span><span style="color:#2222a8;">navi-drawer__scrim</span><span style="color:#a894a6;">"</span> <span style="color:#9a4a0c;">style</span><span style="color:#a894a6;">=</span><span style="color:#a894a6;">"</span><span style="color:#2222a8;">touch-action: none;</span><span style="color:#a894a6;">"</span><span style="color:#a894a6;">&gt;</span><span style="color:#a894a6;">&lt;/</span><span style="color:#8f2d88;">div</span><span style="color:#a894a6;">&gt;</span></span>
<span id="t110" class="t" style="top:152px;font:400 5.86px/7px 'Liberation Mono',monospace;color:#303942;left:612.00px;-webkit-text-stroke:0.09px;"><span style="color:#a894a6;">&lt;</span><span style="color:#8f2d88;">div</span> <span style="color:#9a4a0c;">class</span><span style="color:#a894a6;">=</span><span style="color:#a894a6;">"</span><span style="color:#2222a8;">navi-drawer__content</span><span style="color:#a894a6;">"</span> <span style="color:#9a4a0c;">style</span><span style="color:#a894a6;">=</span><span style="color:#a894a6;">"</span><span style="color:#2222a8;">touch-action: none; transition-proper</span></span>
<svg style="left:606.40px;top:153.65px" width="3.8" height="3.2" viewBox="0 0 3.8 3.2"><path d="M0.1 0.2 L3.7 0.2 L1.9 3.1Z" fill="#6e6e6e"/></svg>
<span id="t111" class="t" style="top:161px;font:400 5.86px/7px 'Liberation Mono',monospace;color:#303942;left:606.00px;-webkit-text-stroke:0.09px;"><span style="color:#2222a8;">ty: margin;</span><span style="color:#a894a6;">"</span><span style="color:#a894a6;">&gt;</span></span>
<span id="t112" class="t" style="top:170px;font:400 5.86px/7px 'Liberation Mono',monospace;color:#303942;left:618.40px;-webkit-text-stroke:0.09px;"><span style="color:#a894a6;">&lt;</span><span style="color:#8f2d88;">div</span> <span style="color:#9a4a0c;">class</span><span style="color:#a894a6;">=</span><span style="color:#a894a6;">"</span><span style="color:#2222a8;">brand-expression</span><span style="color:#a894a6;">"</span><span style="color:#a894a6;">&gt;</span><span style="color:#303942;">…</span><span style="color:#a894a6;">&lt;/</span><span style="color:#8f2d88;">div</span><span style="color:#a894a6;">&gt;</span></span>
<svg style="left:613.20px;top:170.99px" width="3.4" height="3.8" viewBox="0 0 3.4 3.8"><path d="M0.2 0.1 L3.2 1.9 L0.2 3.7Z" fill="#6e6e6e"/></svg>
<span id="t113" class="t" style="top:179px;font:400 5.86px/7px 'Liberation Mono',monospace;color:#303942;left:618.40px;-webkit-text-stroke:0.09px;"><span style="color:#a894a6;">&lt;</span><span style="color:#8f2d88;">vaadin-text-field</span> <span style="color:#9a4a0c;">tabindex</span><span style="color:#a894a6;">=</span><span style="color:#a894a6;">"</span><span style="color:#2222a8;">0</span><span style="color:#a894a6;">"</span><span style="color:#a894a6;">&gt;</span></span>
<svg style="left:612.80px;top:180.56px" width="3.8" height="3.2" viewBox="0 0 3.8 3.2"><path d="M0.1 0.2 L3.7 0.2 L1.9 3.1Z" fill="#6e6e6e"/></svg>
<span id="t114" class="t" style="top:188px;font:400 5.86px/7px 'Liberation Mono',monospace;color:#303942;left:624.80px;-webkit-text-stroke:0.09px;"><span style="color:#525a63;">#shadow-root (open)</span></span>
<svg style="left:619.20px;top:189.53px" width="3.8" height="3.2" viewBox="0 0 3.8 3.2"><path d="M0.1 0.2 L3.7 0.2 L1.9 3.1Z" fill="#6e6e6e"/></svg>
<span id="t115" class="t" style="top:197px;font:400 5.86px/7px 'Liberation Mono',monospace;color:#303942;left:631.20px;-webkit-text-stroke:0.09px;"><span style="color:#a894a6;">&lt;</span><span style="color:#8f2d88;">style</span><span style="color:#a894a6;">&gt;</span><span style="color:#303942;">…</span><span style="color:#a894a6;">&lt;/</span><span style="color:#8f2d88;">style</span><span style="color:#a894a6;">&gt;</span></span>
<svg style="left:626.00px;top:197.90px" width="3.4" height="3.8" viewBox="0 0 3.4 3.8"><path d="M0.2 0.1 L3.2 1.9 L0.2 3.7Z" fill="#6e6e6e"/></svg>
<span id="t116" class="t" style="top:206px;font:400 5.86px/7px 'Liberation Mono',monospace;color:#303942;left:631.20px;-webkit-text-stroke:0.09px;"><span style="color:#a894a6;">&lt;</span><span style="color:#8f2d88;">div</span> <span style="color:#9a4a0c;">class</span><span style="color:#a894a6;">=</span><span style="color:#a894a6;">"</span><span style="color:#2222a8;">vaadin-text-field-container</span><span style="color:#a894a6;">"</span><span style="color:#a894a6;">&gt;</span></span>
<svg style="left:625.60px;top:207.47px" width="3.8" height="3.2" viewBox="0 0 3.8 3.2"><path d="M0.1 0.2 L3.7 0.2 L1.9 3.1Z" fill="#6e6e6e"/></svg>
<span id="t117" class="t" style="top:215px;font:400 5.86px/7px 'Liberation Mono',monospace;color:#303942;left:637.60px;-webkit-text-stroke:0.09px;"><span style="color:#a894a6;">&lt;</span><span style="color:#8f2d88;">label</span> <span style="color:#9a4a0c;">part</span><span style="color:#a894a6;">=</span><span style="color:#a894a6;">"</span><span style="color:#2222a8;">label</span><span style="color:#a894a6;">"</span> <span style="color:#9a4a0c;">id</span><span style="color:#a894a6;">=</span><span style="color:#a894a6;">"</span><span style="color:#2222a8;">vaadin-text-field-label-0</span><span style="color:#a894a6;">"</span><span style="color:#a894a6;">&gt;</span><span style="color:#a894a6;">&lt;/</span><span style="color:#8f2d88;">label</span><span style="color:#a894a6;">&gt;</span></span>
<span id="t118" class="t" style="top:224px;font:400 5.86px/7px 'Liberation Mono',monospace;color:#303942;left:637.60px;-webkit-text-stroke:0.09px;"><span style="color:#a894a6;">&lt;</span><span style="color:#8f2d88;">div</span> <span style="color:#9a4a0c;">part</span><span style="color:#a894a6;">=</span><span style="color:#a894a6;">"</span><span style="color:#2222a8;">input-field</span><span style="color:#a894a6;">"</span> <span style="color:#9a4a0c;">id</span><span style="color:#a894a6;">=</span><span style="color:#a894a6;">"</span><span style="color:#2222a8;">vaadin-text-field-input-0</span><span style="color:#a894a6;">"</span><span style="color:#a894a6;">&gt;</span></span>
<svg style="left:632.00px;top:225.41px" width="3.8" height="3.2" viewBox="0 0 3.8 3.2"><path d="M0.1 0.2 L3.7 0.2 L1.9 3.1Z" fill="#6e6e6e"/></svg>
<span id="t119" class="t" style="top:233px;font:400 5.86px/7px 'Liberation Mono',monospace;color:#303942;left:644.00px;-webkit-text-stroke:0.09px;"><span style="color:#a894a6;">&lt;</span><span style="color:#8f2d88;">slot</span> <span style="color:#9a4a0c;">name</span><span style="color:#a894a6;">=</span><span style="color:#a894a6;">"</span><span style="color:#2222a8;">prefix</span><span style="color:#a894a6;">"</span><span style="color:#a894a6;">&gt;</span><span style="color:#303942;">…</span><span style="color:#a894a6;">&lt;/</span><span style="color:#8f2d88;">slot</span><span style="color:#a894a6;">&gt;</span></span>
<svg style="left:638.80px;top:233.78px" width="3.4" height="3.8" viewBox="0 0 3.4 3.8"><path d="M0.2 0.1 L3.2 1.9 L0.2 3.7Z" fill="#6e6e6e"/></svg>
<span id="t120" class="t" style="top:242px;font:400 5.86px/7px 'Liberation Mono',monospace;color:#303942;left:644.00px;-webkit-text-stroke:0.09px;"><span style="color:#a894a6;">&lt;</span><span style="color:#8f2d88;">slot</span> <span style="color:#9a4a0c;">name</span><span style="color:#a894a6;">=</span><span style="color:#a894a6;">"</span><span style="color:#2222a8;">input</span><span style="color:#a894a6;">"</span><span style="color:#a894a6;">&gt;</span></span>
<svg style="left:638.40px;top:243.35px" width="3.8" height="3.2" viewBox="0 0 3.8 3.2"><path d="M0.1 0.2 L3.7 0.2 L1.9 3.1Z" fill="#6e6e6e"/></svg>
<span id="t121" class="t" style="top:251px;font:400 5.86px/7px 'Liberation Mono',monospace;color:#303942;left:650.40px;-webkit-text-stroke:0.09px;"><span style="color:#a894a6;">&lt;</span><span style="color:#8f2d88;">input</span> <span style="color:#9a4a0c;">part</span><span style="color:#a894a6;">=</span><span style="color:#a894a6;">"</span><span style="color:#2222a8;">value</span><span style="color:#a894a6;">"</span> <span style="color:#9a4a0c;">tabindex</span><span style="color:#a894a6;">=</span><span style="color:#a894a6;">"</span><span style="color:#2222a8;">0</span><span style="color:#a894a6;">"</span> <span style="color:#9a4a0c;">aria-labelledby</span><span style="color:#a894a6;">=</span><span style="color:#a894a6;">"</span><span style="color:#2222a8;">vaadin-text-field</span></span>
<span id="t122" class="t" style="top:260px;font:400 5.86px/7px 'Liberation Mono',monospace;color:#303942;left:650.40px;-webkit-text-stroke:0.09px;"><span style="color:#2222a8;">-input-0</span><span style="color:#a894a6;">"</span> <span style="color:#9a4a0c;">placeholder</span><span style="color:#a894a6;">=</span><span style="color:#a894a6;">"</span><span style="color:#2222a8;">Search</span><span style="color:#a894a6;">"</span><span style="color:#a894a6;">&gt;</span><span style="color:#6e6e6e;font-style:italic;"> == $0</span></span>
<span id="t123" class="t" style="top:269px;font:400 5.86px/7px 'Liberation Mono',monospace;color:#303942;left:644.00px;-webkit-text-stroke:0.09px;"><span style="color:#a894a6;">&lt;/</span><span style="color:#8f2d88;">slot</span><span style="color:#a894a6;">&gt;</span></span>
<span id="t124" class="t" style="top:278px;font:400 5.86px/7px 'Liberation Mono',monospace;color:#303942;left:644.00px;-webkit-text-stroke:0.09px;"><span style="color:#a894a6;">&lt;</span><span style="color:#8f2d88;">div</span> <span style="color:#9a4a0c;">part</span><span style="color:#a894a6;">=</span><span style="color:#a894a6;">"</span><span style="color:#2222a8;">clear-button</span><span style="color:#a894a6;">"</span> <span style="color:#9a4a0c;">id</span><span style="color:#a894a6;">=</span><span style="color:#a894a6;">"</span><span style="color:#2222a8;">clearButton</span><span style="color:#a894a6;">"</span> <span style="color:#9a4a0c;">role</span><span style="color:#a894a6;">=</span><span style="color:#a894a6;">"</span><span style="color:#2222a8;">button</span><span style="color:#a894a6;">"</span> <span style="color:#9a4a0c;">aria-label</span><span style="color:#a894a6;">=</span></span>
<span id="t125" class="t" style="top:287px;font:400 5.86px/7px 'Liberation Mono',monospace;color:#303942;left:644.00px;-webkit-text-stroke:0.09px;"><span style="color:#a894a6;">"</span><span style="color:#2222a8;">Clear</span><span style="color:#a894a6;">"</span> <span style="color:#9a4a0c;">hidden</span><span style="color:#a894a6;">=</span><span style="color:#a894a6;">"</span><span style="color:#2222a8;">true</span><span style="color:#a894a6;">"</span><span style="color:#a894a6;">&gt;</span><span style="color:#a894a6;">&lt;/</span><span style="color:#8f2d88;">div</span><span style="color:#a894a6;">&gt;</span></span>
<span id="t126" class="t" style="top:296px;font:400 5.86px/7px 'Liberation Mono',monospace;color:#303942;left:644.00px;-webkit-text-stroke:0.09px;"><span style="color:#a894a6;">&lt;</span><span style="color:#8f2d88;">slot</span> <span style="color:#9a4a0c;">name</span><span style="color:#a894a6;">=</span><span style="color:#a894a6;">"</span><span style="color:#2222a8;">suffix</span><span style="color:#a894a6;">"</span><span style="color:#a894a6;">&gt;</span><span style="color:#303942;">…</span><span style="color:#a894a6;">&lt;/</span><span style="color:#8f2d88;">slot</span><span style="color:#a894a6;">&gt;</span></span>
<svg style="left:638.80px;top:296.57px" width="3.4" height="3.8" viewBox="0 0 3.4 3.8"><path d="M0.2 0.1 L3.2 1.9 L0.2 3.7Z" fill="#6e6e6e"/></svg>
<span id="t127" class="t" style="top:305px;font:400 5.86px/7px 'Liberation Mono',monospace;color:#303942;left:644.00px;-webkit-text-stroke:0.09px;"><span style="color:#9a4a0c;">::after</span></span>
<span id="t128" class="t" style="top:314px;font:400 5.86px/7px 'Liberation Mono',monospace;color:#303942;left:637.60px;-webkit-text-stroke:0.09px;"><span style="color:#a894a6;">&lt;/</span><span style="color:#8f2d88;">div</span><span style="color:#a894a6;">&gt;</span></span>
<span id="t129" class="t" style="top:322px;font:400 5.86px/7px 'Liberation Mono',monospace;color:#303942;left:637.60px;-webkit-text-stroke:0.09px;"><span style="color:#a894a6;">&lt;</span><span style="color:#8f2d88;">div</span> <span style="color:#9a4a0c;">part</span><span style="color:#a894a6;">=</span><span style="color:#a894a6;">"</span><span style="color:#2222a8;">error-message</span><span style="color:#a894a6;">"</span> <span style="color:#9a4a0c;">aria-live</span><span style="color:#a894a6;">=</span><span style="color:#a894a6;">"</span><span style="color:#2222a8;">assertive</span><span style="color:#a894a6;">"</span> <span style="color:#9a4a0c;">aria-hidden</span><span style="color:#a894a6;">=</span><span style="color:#a894a6;">"</span><span style="color:#2222a8;">true</span><span style="color:#a894a6;">"</span> <span style="color:#9a4a0c;">id</span><span style="color:#a894a6;">=</span></span>
<span id="t130" class="t" style="top:331px;font:400 5.86px/7px 'Liberation Mono',monospace;color:#303942;left:637.60px;-webkit-text-stroke:0.09px;"><span style="color:#a894a6;">"</span><span style="color:#2222a8;">vaadin-text-field-error-0</span><span style="color:#a894a6;">"</span><span style="color:#a894a6;">&gt;</span><span style="color:#a894a6;">&lt;/</span><span style="color:#8f2d88;">div</span><span style="color:#a894a6;">&gt;</span></span>
<span id="t131" class="t" style="top:340px;font:400 5.86px/7px 'Liberation Mono',monospace;color:#303942;left:631.20px;-webkit-text-stroke:0.09px;"><span style="color:#a894a6;">&lt;/</span><span style="color:#8f2d88;">div</span><span style="color:#a894a6;">&gt;</span></span>
<span id="t132" class="t" style="top:349px;font:400 5.86px/7px 'Liberation Mono',monospace;color:#303942;left:637.60px;-webkit-text-stroke:0.09px;"><span style="color:#a894a6;">&lt;</span><span style="color:#8f2d88;">div</span> <span style="color:#9a4a0c;">part</span><span style="color:#a894a6;">=</span><span style="color:#a894a6;">"</span><span style="color:#2222a8;">label</span><span style="color:#a894a6;">"</span> <span style="color:#9a4a0c;">on-click</span><span style="color:#a894a6;">=</span><span style="color:#a894a6;">"</span><span style="color:#2222a8;">focus</span><span style="color:#a894a6;">"</span> <span style="color:#9a4a0c;">id</span><span style="color:#a894a6;">=</span><span style="color:#a894a6;">"</span><span style="color:#2222a8;">slot</span><span style="color:#a894a6;">"</span><span style="color:#a894a6;">&gt;</span></span>
<span id="t133" class="t" style="top:249px;font:400 6px/6px 'Liberation Sans',sans-serif;color:#6e6e6e;left:575.40px;">…</span>
<div class="b" style="left:887.2px;top:14.8px;width:8.3px;height:336.4px;background:#f1f1f1;"></div>
<div class="b" style="left:887.7px;top:23.3px;width:6.4px;height:224.2px;background:#c1c1c1;"></div>
<svg style="left:889.3px;top:17.6px" width="4.4" height="2.6" viewBox="0 0 4.4 2.6"><path d="M0 2.5 L2.2 0.1 L4.4 2.5Z" fill="#a3a3a3"/></svg>
<svg style="left:889.3px;top:345px" width="4.4" height="2.6" viewBox="0 0 4.4 2.6"><path d="M0 0.1 L2.2 2.5 L4.4 0.1Z" fill="#505050"/></svg>
<div class="b" style="left:572px;top:351px;width:323.5px;height:12.6px;background:#ffffff;border-top:0.6px solid #d4d6d9;border-bottom:0.6px solid #d4d6d9;"></div>
<div class="b" style="left:572px;top:352px;width:14.4px;height:11px;background:#f3f3f3;"></div>
<div class="b" style="left:881.5px;top:352px;width:14px;height:11px;background:#f3f3f3;"></div>
<span id="t134" class="t" style="top:354px;font:400 6.4px/7px 'Liberation Sans',sans-serif;color:#888;left:575.20px;">…</span>
<span id="t135" class="t" style="top:354px;font:400 6.4px/7px 'Liberation Sans',sans-serif;color:#9a2a92;left:586.00px;letter-spacing:0.296px;">xt-field</span>
<span id="t136" class="t" style="top:354px;font:400 6.4px/7px 'Liberation Sans',sans-serif;color:#9a2a92;left:615.60px;letter-spacing:0.072px;">#shadow-root</span>
<span id="t137" class="t" style="top:354px;font:400 6.4px/7px 'Liberation Sans',sans-serif;color:#9a2a92;left:662.60px;letter-spacing:0.067px;"><span style="color:#9a2a92;">div</span><span style="color:#a3560f;">.vaadin-text-field-container</span></span>
<span id="t138" class="t" style="top:354px;font:400 6.4px/7px 'Liberation Sans',sans-serif;color:#9a2a92;left:755.80px;letter-spacing:0.113px;"><span style="color:#9a2a92;">div</span><span style="color:#3a3a3a;">#vaadin-text-field-input-0</span></span>
<span id="t139" class="t" style="top:354px;font:400 6.4px/7px 'Liberation Sans',sans-serif;color:#9a2a92;left:844.70px;letter-spacing:0.087px;">slot</span>
<span id="t140" class="t" style="top:354px;font:400 6.4px/7px 'Liberation Sans',sans-serif;color:#9a2a92;left:862.80px;letter-spacing:0.068px;">input</span>
<svg style="left:884.8px;top:359px" width="6.4" height="1.4" viewBox="0 0 6.4 1.4"><rect x="0" y="0" width="1.3" height="1.3" fill="#333"/><rect x="2.5" y="0" width="1.3" height="1.3" fill="#333"/><rect x="5" y="0" width="1.3" height="1.3" fill="#333"/></svg>
<div class="b" style="left:572px;top:0px;width:452px;height:14.6px;background:#f3f3f3;border-bottom:0.6px solid #dadcdf;"></div>
<svg style="left:577px;top:3.2px" width="8" height="8" viewBox="0 0 8 8"><path d="M6.6 3.2 V1 Q6.6 0.5 6.1 0.5 H1 Q0.5 0.5 0.5 1 V6 Q0.5 6.5 1 6.5 H3.2" fill="none" stroke="#686c71" stroke-width="0.7"/><path d="M3.6 3.4 L7.6 5 L6 5.6 L7.4 7.2 L6.9 7.7 L5.5 6.1 L4.6 7.4Z" fill="#5f6368"/></svg>
<svg style="left:590.6px;top:2.6px" width="8.6" height="9" viewBox="0 0 8.6 9"><path d="M2.6 2.2 V1 Q2.6 0.5 3.1 0.5 H7.6 Q8.1 0.5 8.1 1 V8 Q8.1 8.5 7.6 8.5 H4.2" fill="none" stroke="#686c71" stroke-width="0.7"/><rect x="0.5" y="3.2" width="3.4" height="5.3" rx="0.4" fill="none" stroke="#686c71" stroke-width="0.7"/></svg>
<div class="b" style="left:604.9px;top:3px;width:0.6px;height:9px;background:#cfcfcf;"></div>
<span id="t141" class="t" style="top:4px;font:400 6.4px/7px 'Liberation Sans',sans-serif;color:#333;left:615.00px;letter-spacing:-0.130px;">Elements</span>
<span id="t142" class="t" style="top:4px;font:400 6.4px/7px 'Liberation Sans',sans-serif;color:#5a5e63;left:653.00px;letter-spacing:-0.065px;">Console</span>
<span id="t143" class="t" style="top:4px;font:400 6.4px/7px 'Liberation Sans',sans-serif;color:#5a5e63;left:688.40px;letter-spacing:-0.265px;">Sources</span>
<span id="t144" class="t" style="top:4px;font:400 6.4px/7px 'Liberation Sans',sans-serif;color:#5a5e63;left:722.90px;letter-spacing:0.092px;">Network</span>
<span id="t145" class="t" style="top:4px;font:400 6.4px/7px 'Liberation Sans',sans-serif;color:#5a5e63;left:760.00px;letter-spacing:-0.145px;">Performance</span>
<span id="t146" class="t" style="top:4px;font:400 6.4px/7px 'Liberation Sans',sans-serif;color:#5a5e63;left:808.00px;letter-spacing:0.068px;">Memory</span>
<span id="t147" class="t" style="top:4px;font:400 6.4px/7px 'Liberation Sans',sans-serif;color:#5a5e63;left:844.00px;letter-spacing:0.067px;">Application</span>
<span id="t148" class="t" style="top:4px;font:400 6.4px/7px 'Liberation Sans',sans-serif;color:#5a5e63;left:888.80px;letter-spacing:-0.112px;">Security</span>
<span id="t149" class="t" style="top:2px;font:400 9px/10px 'Liberation Sans',sans-serif;color:#4a4e53;left:926.80px;">»</span>
<div class="b" style="left:609px;top:13.4px;width:38.4px;height:1.1px;background:#1a73e8;"></div>
<div class="b" style="left:975.4px;top:3px;width:0.6px;height:9px;background:#cfcfcf;"></div>
<svg style="left:981.4px;top:3.2px" width="8.4" height="8.4" viewBox="-4.2 -4.2 8.4 8.4"><g fill="#4d5156">
<circle r="2.9"/><g id="gt"><rect x="-0.9" y="-4.1" width="1.8" height="8.2" rx="0.3"/></g>
<rect x="-0.9" y="-4.1" width="1.8" height="8.2" rx="0.3" transform="rotate(45)"/>
<rect x="-0.9" y="-4.1" width="1.8" height="8.2" rx="0.3" transform="rotate(90)"/>
<rect x="-0.9" y="-4.1" width="1.8" height="8.2" rx="0.3" transform="rotate(135)"/></g>
<circle r="1.25" fill="#f3f3f3"/></svg>
<div class="b" style="left:999.6px;top:3.9px;width:1.8px;height:1.6px;background:#3e4246;"></div>
<div class="b" style="left:999.6px;top:6.9px;width:1.8px;height:1.6px;background:#3e4246;"></div>
<div class="b" style="left:999.6px;top:9.9px;width:1.8px;height:1.6px;background:#3e4246;"></div>
<svg style="left:1012.4px;top:4.2px" width="6" height="6" viewBox="0 0 6 6"><path d="M0.4 0.4 L5.6 5.6 M5.6 0.4 L0.4 5.6" stroke="#4d5156" stroke-width="0.8" fill="none"/></svg>
<div class="b" style="left:571.6px;top:0px;width:0.6px;height:505px;background:#e6e7e9;"></div>
<div class="b" style="left:895.6px;top:14.8px;width:128.39999999999998px;height:341px;background:#ffffff;border-left:0.6px solid #d6d6d6;"></div>
<div class="b" style="left:896.2px;top:14.9px;width:127.79999999999998px;height:13.9px;background:#f3f3f3;border-bottom:0.6px solid #cdcfd3;"></div>
<span id="t150" class="t" style="top:18px;font:400 6.4px/7px 'Liberation Sans',sans-serif;color:#333;left:901.20px;letter-spacing:-0.168px;">Styles</span>
<span id="t151" class="t" style="top:18px;font:400 6.4px/7px 'Liberation Sans',sans-serif;color:#5a5e63;left:927.80px;letter-spacing:0.013px;">Computed</span>
<span id="t152" class="t" style="top:18px;font:400 6.4px/7px 'Liberation Sans',sans-serif;color:#5a5e63;left:968.20px;letter-spacing:-0.001px;">Layout</span>
<span id="t153" class="t" style="top:16px;font:400 9px/10px 'Liberation Sans',sans-serif;color:#4a4e53;left:996.60px;">»</span>
<div class="b" style="left:896.8px;top:27.6px;width:25.8px;height:1.1px;background:#1a73e8;"></div>
<div class="b" style="left:896.2px;top:28.9px;width:127.79999999999998px;height:13.8px;background:#f3f3f3;border-bottom:0.5px solid #e6e6e6;"></div>
<div class="b" style="left:898px;top:31px;width:44.2px;height:10.4px;background:#ffffff;"></div>
<span id="t154" class="t" style="top:32px;font:400 6.4px/7px 'Liberation Sans',sans-serif;color:#8a8a8a;left:900.00px;letter-spacing:-0.067px;">Filter</span>
<span id="t155" class="t" style="top:33px;font:400 5.86px/7px 'Liberation Mono',monospace;color:#3a3e43;left:948.40px;letter-spacing:-0.070px;-webkit-text-stroke:0.25px;">:hov</span>
<span id="t156" class="t" style="top:33px;font:400 5.86px/7px 'Liberation Mono',monospace;color:#3a3e43;left:968.00px;letter-spacing:-0.120px;-webkit-text-stroke:0.25px;">.cls</span>
<svg style="left:988.4px;top:33px" width="7.4" height="7.4" viewBox="0 0 7.4 7.4"><path d="M2.7 0.2 V5.4 M0.1 2.8 H5.3" stroke="#3e4246" stroke-width="1" fill="none"/><path d="M7.2 5.4 V7.2 H5.4Z" fill="#4d5156"/></svg>
<svg style="left:1002.4px;top:32.4px" width="7.8" height="7.6" viewBox="0 0 7.8 7.6"><rect x="0.4" y="0.4" width="7" height="6.8" fill="none" stroke="#5f6368" stroke-width="0.8"/><path d="M5.2 0.4 V7.2" stroke="#5f6368" stroke-width="0.7"/><path d="M4 2.4 V5.2 L2 3.8Z" fill="#5f6368"/></svg>
<span id="t157" class="t" style="top:45px;font:400 5.86px/7px 'Liberation Mono',monospace;color:#8a8a8a;left:898.60px;-webkit-text-stroke:0.08px;">element.style {</span>
<span id="t158" class="t" style="top:53px;font:400 5.86px/7px 'Liberation Mono',monospace;color:#8a8a8a;left:898.60px;-webkit-text-stroke:0.08px;">}</span>
<div class="b" style="left:896.2px;top:61.8px;width:119.4px;height:0.6px;background:#d8d8d8;"></div>
<span id="t159" class="t" style="top:65px;font:400 5.86px/7px 'Liberation Mono',monospace;color:#2b2b2b;left:898.60px;-webkit-text-stroke:0.08px;">[part="value"],</span>
<span id="t160" class="t" style="top:65px;font:400 5.86px/7px 'Liberation Mono',monospace;color:#8a8a8a;right:10.20px;">&lt;style&gt;</span>
<span id="t161" class="t" style="top:72px;font:400 5.86px/7px 'Liberation Mono',monospace;color:#8a8a8a;left:898.60px;-webkit-text-stroke:0.08px;">[part="input-field"]</span>
<span id="t162" class="t" style="top:80px;font:400 5.86px/7px 'Liberation Mono',monospace;color:#8a8a8a;left:898.60px;-webkit-text-stroke:0.08px;">::slotted(input), [part="input-</span>
<span id="t163" class="t" style="top:87px;font:400 5.86px/7px 'Liberation Mono',monospace;color:#8a8a8a;left:898.60px;-webkit-text-stroke:0.08px;">field"] ::slotted(textarea),</span>
<span id="t164" class="t" style="top:95px;font:400 5.86px/7px 'Liberation Mono',monospace;color:#8a8a8a;left:898.60px;-webkit-text-stroke:0.08px;">[part="input-field"]</span>
<span id="t165" class="t" style="top:102px;font:400 5.86px/7px 'Liberation Mono',monospace;color:#8a8a8a;left:898.60px;-webkit-text-stroke:0.08px;">::slotted([part="value"]) {</span>
<span id="t166" class="t" style="top:110px;font:400 5.86px/7px 'Liberation Mono',monospace;color:#2b2b2b;left:908.20px;-webkit-text-stroke:0.08px;"><span style="color:#c2202a;">cursor</span><span style="color:#30343a;">: inherit;</span></span>
<span id="t167" class="t" style="top:118px;font:400 5.86px/7px 'Liberation Mono',monospace;color:#2b2b2b;left:908.20px;-webkit-text-stroke:0.08px;"><span style="color:#c2202a;">min-height</span><span style="color:#30343a;">: var(--lumo-text-</span></span>
<span id="t168" class="t" style="top:125px;font:400 5.86px/7px 'Liberation Mono',monospace;color:#30343a;left:918.80px;-webkit-text-stroke:0.08px;">field-size);</span>
<span id="t169" class="t" style="top:133px;font:400 5.86px/7px 'Liberation Mono',monospace;color:#2b2b2b;left:908.20px;-webkit-text-stroke:0.08px;"><span style="color:#c2202a;">padding</span><span style="color:#30343a;">:</span><svg style="position:static;display:inline-block;margin:0 0 0 1.1px" width="2.6" height="3.2" viewBox="0 0 2.2 2.8"><path d="M0 0 L2.2 1.4 L0 2.8Z" fill="#6e6e6e"/></svg><span style="color:#30343a;"> 0 0.25em;</span></span>
<span id="t170" class="t" style="top:140px;font:400 5.86px/7px 'Liberation Mono',monospace;color:#c2202a;left:908.20px;-webkit-text-stroke:0.08px;">--_lumo-text-field-overflow-</span>
<span id="t171" class="t" style="top:148px;font:400 5.86px/7px 'Liberation Mono',monospace;color:#2b2b2b;left:918.80px;-webkit-text-stroke:0.08px;"><span style="color:#c2202a;">mask-image</span><span style="color:#30343a;">: </span><span style="display:inline-block;width:3.2px;height:3.2px;background:linear-gradient(135deg,#222 50%,#bbb 50%);border:0.4px solid #555;margin:0 0.6px 0 0;vertical-align:-0.2px;"></span><span style="color:#30343a;">linear-</span></span>
<span id="t172" class="t" style="top:155px;font:400 5.86px/7px 'Liberation Mono',monospace;color:#30343a;left:918.80px;-webkit-text-stroke:0.08px;">gradient(to left,</span>
<span id="t173" class="t" style="top:163px;font:400 5.86px/7px 'Liberation Mono',monospace;color:#2b2b2b;left:918.80px;-webkit-text-stroke:0.08px;"><span style="display:inline-block;width:3.2px;height:3.2px;background:#f4f4f4;border:0.4px solid #9a9a9a;margin:0 0.6px 0 0;vertical-align:-0.2px;"></span><span style="color:#30343a;">transparent, </span><span style="display:inline-block;width:3.2px;height:3.2px;background:#000;border:0.4px solid #000;margin:0 0.6px 0 0;vertical-align:-0.2px;"></span><span style="color:#30343a;">#000</span></span>
<span id="t174" class="t" style="top:170px;font:400 5.86px/7px 'Liberation Mono',monospace;color:#30343a;left:918.80px;-webkit-text-stroke:0.08px;">1.25em);</span>
<span id="t175" class="t" style="top:178px;font:400 5.86px/7px 'Liberation Mono',monospace;color:#2b2b2b;left:908.20px;-webkit-text-stroke:0.08px;"><span style="color:#c2202a;">-webkit-mask-image</span><span style="color:#30343a;">: var(--</span></span>
<span id="t176" class="t" style="top:185px;font:400 5.86px/7px 'Liberation Mono',monospace;color:#30343a;left:918.80px;-webkit-text-stroke:0.08px;">_lumo-text-field-overflow-</span>
<span id="t177" class="t" style="top:193px;font:400 5.86px/7px 'Liberation Mono',monospace;color:#30343a;left:918.80px;-webkit-text-stroke:0.08px;">mask-image);</span>
<span id="t178" class="t" style="top:200px;font:400 5.86px/7px 'Liberation Mono',monospace;color:#8a8a8a;left:898.60px;-webkit-text-stroke:0.08px;">}</span>
<div class="b" style="left:896.2px;top:209px;width:119.4px;height:0.6px;background:#d8d8d8;"></div>
<span id="t179" class="t" style="top:212px;font:400 5.86px/7px 'Liberation Mono',monospace;color:#2b2b2b;left:898.60px;-webkit-text-stroke:0.08px;">[part="value"],</span>
<span id="t180" class="t" style="top:211px;font:400 5.86px/7px 'Liberation Mono',monospace;color:#8a8a8a;right:10.20px;">&lt;style&gt;</span>
<span id="t181" class="t" style="top:219px;font:400 5.86px/7px 'Liberation Mono',monospace;color:#8a8a8a;left:898.60px;-webkit-text-stroke:0.08px;">[part="input-field"]</span>
<span id="t182" class="t" style="top:226px;font:400 5.86px/7px 'Liberation Mono',monospace;color:#8a8a8a;left:898.60px;-webkit-text-stroke:0.08px;">::slotted(input), [part="input-</span>
<span id="t183" class="t" style="top:234px;font:400 5.86px/7px 'Liberation Mono',monospace;color:#8a8a8a;left:898.60px;-webkit-text-stroke:0.08px;">field"] ::slotted(textarea),</span>
<span id="t184" class="t" style="top:241px;font:400 5.86px/7px 'Liberation Mono',monospace;color:#8a8a8a;left:898.60px;-webkit-text-stroke:0.08px;">[part="input-field"]</span>
<span id="t185" class="t" style="top:249px;font:400 5.86px/7px 'Liberation Mono',monospace;color:#8a8a8a;left:898.60px;-webkit-text-stroke:0.08px;">::slotted([part="value"]) {</span>
<span id="t186" class="t" style="top:257px;font:400 5.86px/7px 'Liberation Mono',monospace;color:#2b2b2b;left:908.20px;-webkit-text-stroke:0.08px;"><span style="color:#c2202a;">flex</span><span style="color:#30343a;">:</span><svg style="position:static;display:inline-block;margin:0 0 0 1.1px" width="2.6" height="3.2" viewBox="0 0 2.2 2.8"><path d="M0 0 L2.2 1.4 L0 2.8Z" fill="#6e6e6e"/></svg><span style="color:#30343a;"> auto;</span></span>
<span id="t187" class="t" style="top:265px;font:400 5.86px/7px 'Liberation Mono',monospace;color:#2b2b2b;left:908.20px;-webkit-text-stroke:0.08px;"><span style="color:#c2202a;">white-space</span><span style="color:#30343a;">: nowrap;</span></span>
<span id="t188" class="t" style="top:272px;font:400 5.86px/7px 'Liberation Mono',monospace;color:#2b2b2b;left:908.20px;-webkit-text-stroke:0.08px;"><span style="color:#c2202a;">overflow</span><span style="color:#30343a;">:</span><svg style="position:static;display:inline-block;margin:0 0 0 1.1px" width="2.6" height="3.2" viewBox="0 0 2.2 2.8"><path d="M0 0 L2.2 1.4 L0 2.8Z" fill="#6e6e6e"/></svg><span style="color:#30343a;"> hidden;</span></span>
<span id="t189" class="t" style="top:280px;font:400 5.86px/7px 'Liberation Mono',monospace;color:#2b2b2b;left:908.20px;-webkit-text-stroke:0.08px;"><span style="color:#c2202a;">width</span><span style="color:#30343a;">: 100%;</span></span>
<span id="t190" class="t" style="top:287px;font:400 5.86px/7px 'Liberation Mono',monospace;color:#2b2b2b;left:908.20px;-webkit-text-stroke:0.08px;"><span style="color:#c2202a;">height</span><span style="color:#30343a;">: 100%;</span></span>
<span id="t191" class="t" style="top:295px;font:400 5.86px/7px 'Liberation Mono',monospace;color:#8a8a8a;left:898.60px;-webkit-text-stroke:0.08px;">}</span>
<div class="b" style="left:896.2px;top:303px;width:119.4px;height:0.6px;background:#d8d8d8;"></div>
<span id="t192" class="t" style="top:306px;font:400 5.86px/7px 'Liberation Mono',monospace;color:#2b2b2b;left:898.60px;-webkit-text-stroke:0.08px;">[part="value"],</span>
<span id="t193" class="t" style="top:306px;font:400 5.86px/7px 'Liberation Mono',monospace;color:#8a8a8a;right:10.20px;">&lt;style&gt;</span>
<span id="t194" class="t" style="top:314px;font:400 5.86px/7px 'Liberation Mono',monospace;color:#8a8a8a;left:898.60px;-webkit-text-stroke:0.08px;">[part="input-field"]</span>
<span id="t195" class="t" style="top:321px;font:400 5.86px/7px 'Liberation Mono',monospace;color:#8a8a8a;left:898.60px;-webkit-text-stroke:0.08px;">::slotted(input), [part="input-</span>
<span id="t196" class="t" style="top:328px;font:400 5.86px/7px 'Liberation Mono',monospace;color:#8a8a8a;left:898.60px;-webkit-text-stroke:0.08px;">field"] ::slotted(textarea) {</span>
<span id="t197" class="t" style="top:336px;font:400 5.86px/7px 'Liberation Mono',monospace;color:#2b2b2b;left:908.20px;-webkit-text-stroke:0.08px;text-decoration:line-through;text-decoration-color:#444;text-decoration-thickness:0.5px;"><span style="color:#c2202a;">-webkit-appearance</span><span style="color:#30343a;">: none;</span></span>
<span id="t198" class="t" style="top:344px;font:400 5.86px/7px 'Liberation Mono',monospace;color:#2b2b2b;left:908.20px;-webkit-text-stroke:0.08px;text-decoration:line-through;text-decoration-color:#888;text-decoration-thickness:0.5px;"><span style="color:#b98a8a;">-moz-appearance</span><span style="color:#999;">: none;</span></span>
<span id="t199" class="t" style="top:352px;font:400 5.86px/7px 'Liberation Mono',monospace;color:#2b2b2b;left:908.20px;-webkit-text-stroke:0.08px;"><span style="color:#c2202a;">outline</span><span style="color:#30343a;">:</span><svg style="position:static;display:inline-block;margin:0 0 0 1.1px" width="2.6" height="3.2" viewBox="0 0 2.2 2.8"><path d="M0 0 L2.2 1.4 L0 2.8Z" fill="#6e6e6e"/></svg><span style="color:#30343a;"> none;</span></span>
<div class="b" style="left:896.2px;top:354.8px;width:119.4px;height:8.4px;background:#f1f1f1;"></div>
<svg style="left:899.6px;top:357.2px" width="2.2" height="3.8" viewBox="0 0 2.6 4.4"><path d="M2.5 0 L0.1 2.2 L2.5 4.4Z" fill="#8a8a8a"/></svg>
<svg style="left:1009.4px;top:357.2px" width="2.2" height="3.8" viewBox="0 0 2.6 4.4"><path d="M0.1 0 L2.5 2.2 L0.1 4.4Z" fill="#8a8a8a"/></svg>
<div class="b" style="left:1015px;top:29px;width:9px;height:326px;background:#f1f1f1;"></div>
<div class="b" style="left:1015px;top:355px;width:9px;height:8.2px;background:#dcdcdc;"></div>
<div class="b" style="left:1016.4px;top:38.3px;width:6.4px;height:22.4px;background:#c1c1c1;"></div>
<svg style="left:1017.5px;top:32px" width="4.4" height="2.6" viewBox="0 0 4.4 2.6"><path d="M0 2.5 L2.2 0.1 L4.4 2.5Z" fill="#a3a3a3"/></svg>
<svg style="left:1017.5px;top:348.6px" width="4.4" height="2.6" viewBox="0 0 4.4 2.6"><path d="M0 0.1 L2.2 2.5 L4.4 0.1Z" fill="#505050"/></svg>
<div class="b" style="left:572px;top:363.4px;width:452px;height:141.6px;background:#ffffff;"></div>
<div class="b" style="left:572px;top:363.4px;width:452px;height:15.2px;background:#f3f3f3;border-top:0.6px solid #cdcfd3;border-bottom:0.6px solid #cdcfd3;"></div>
<div class="b" style="left:579.8px;top:368px;width:2px;height:1.8px;background:#5f6368;"></div>
<div class="b" style="left:579.8px;top:370.6px;width:2px;height:1.8px;background:#5f6368;"></div>
<div class="b" style="left:579.8px;top:373.2px;width:2px;height:1.8px;background:#5f6368;"></div>
<span id="t200" class="t" style="top:368px;font:400 6.4px/7px 'Liberation Sans',sans-serif;color:#5a5e63;left:592.40px;letter-spacing:-0.122px;">Console</span>
<span id="t201" class="t" style="top:368px;font:400 6.4px/7px 'Liberation Sans',sans-serif;color:#333;left:625.00px;letter-spacing:0.009px;">What's New</span>
<svg style="left:662.6px;top:369px" width="3.8" height="3.8" viewBox="0 0 3.8 3.8"><path d="M0.3 0.3 L3.5 3.5 M3.5 0.3 L0.3 3.5" stroke="#444" stroke-width="0.8" fill="none"/></svg>
<div class="b" style="left:620.4px;top:377px;width:48.8px;height:1.1px;background:#1a73e8;"></div>
<svg style="left:1012.6px;top:368.6px" width="5" height="5" viewBox="0 0 5 5"><path d="M0.3 0.3 L4.7 4.7 M4.7 0.3 L0.3 4.7" stroke="#4d5156" stroke-width="0.75" fill="none"/></svg>
<div class="b" style="left:572px;top:378.8px;width:452px;height:14.2px;background:#f3f3f3;border-bottom:0.6px solid #d9d9d9;"></div>
<span id="t202" class="t" style="top:382px;font:400 6.4px/7px 'Liberation Sans',sans-serif;color:#303030;left:580.20px;letter-spacing:0.039px;">Highlights from the Chrome 87 update</span>
<div class="b" style="left:582.2px;top:400px;width:279px;height:26px;background:#ffffff;border:0.6px solid #dedede;border-radius:1px;"></div>
<span id="t203" class="t" style="top:403px;font:400 7.4px/9px 'Liberation Sans',sans-serif;color:#3b6fd8;left:587.00px;letter-spacing:-0.018px;">New CSS Grid debugging tools</span>
<span id="t204" class="t" style="top:414px;font:400 6.4px/7px 'Liberation Sans',sans-serif;color:#909090;left:587.00px;letter-spacing:0.188px;">Debug and inspect CSS Grid with the new CSS Grid debugging tools.</span>
<div class="b" style="left:582.2px;top:428px;width:279px;height:32px;background:#ffffff;border:0.6px solid #dedede;border-radius:1px;"></div>
<span id="t205" class="t" style="top:430px;font:400 7.4px/9px 'Liberation Sans',sans-serif;color:#3b6fd8;left:587.00px;letter-spacing:0.053px;">New WebAuthn tab</span>
<span id="t206" class="t" style="top:441px;font:400 6.4px/7px 'Liberation Sans',sans-serif;color:#909090;left:587.00px;letter-spacing:0.274px;">Emulate authenticators and debug the Web Authentication API with the new WebAuthn</span>
<span id="t207" class="t" style="top:448px;font:400 6.4px/7px 'Liberation Sans',sans-serif;color:#909090;left:587.00px;letter-spacing:-0.293px;">tab.</span>
<div class="b" style="left:582.2px;top:462px;width:279px;height:25px;background:#ffffff;border:0.6px solid #dedede;border-radius:1px;"></div>
<span id="t208" class="t" style="top:464px;font:400 7.4px/9px 'Liberation Sans',sans-serif;color:#3b6fd8;left:587.00px;letter-spacing:0.112px;">Move tools between top and bottom panel</span>
<span id="t209" class="t" style="top:475px;font:400 6.4px/7px 'Liberation Sans',sans-serif;color:#909090;left:587.00px;letter-spacing:0.280px;">Move tools in DevTools between the top and bottom panel.</span>
<div class="b" style="left:582.2px;top:489px;width:279px;height:31px;background:#ffffff;border:0.6px solid #dedede;border-radius:1px;"></div>
<span id="t210" class="t" style="top:491px;font:400 7.4px/9px 'Liberation Sans',sans-serif;color:#3b6fd8;left:587.00px;letter-spacing:-0.051px;">Elements panel updates</span>
<span id="t211" class="t" style="top:502px;font:400 6.4px/7px 'Liberation Sans',sans-serif;color:#909090;left:587.00px;letter-spacing:0.178px;">View the Computed sidebar pane in the Styles pane, and more.</span>
<svg style="left:886.8px;top:403.5px;overflow:hidden" width="128.4" height="101.5" viewBox="0 0 128.4 101.5">
<rect width="128.4" height="101.5" fill="#2a7af3"/>
<g stroke="#4b8ff6" stroke-width="0.5" fill="none">
<path d="M0 12.4H128.4 M0 31.4H128.4 M0 50.4H128.4 M0 69.4H128.4 M0 88.4H128.4 M15.2 0V101.5 M34.2 0V101.5 M53.2 0V101.5 M72.2 0V101.5 M91.2 0V101.5 M110.2 0V101.5"/>
<circle cx="34.2" cy="31.4" r="38"/><circle cx="34.2" cy="31.4" r="44.5"/>
<path d="M14 4 L54 58 M54 4 L14 58"/>
</g>
<g stroke="#bdd5fc" stroke-width="1.1" fill="none" stroke-linecap="round">
<circle cx="35" cy="30.7" r="50.6"/>
<circle cx="34.2" cy="31.4" r="23.8"/>
<circle cx="34.2" cy="31.4" r="16.8"/>
<path d="M0.2 18.7 L32.9 78.6"/>
<path d="M58.1 36.2 L32.9 78.6"/>
<path d="M40 10 H80.6"/>
</g>
<rect x="53.8" y="43.8" width="28.3" height="17.9" rx="3.8" fill="#df1a1e"/>
<path d="M64 48.2 L64 57.4 L72.8 52.8Z" fill="#fff"/>
<text x="95.4" y="60.8" font-family="'Liberation Sans',sans-serif" font-size="19" fill="#fff" textLength="31.2" lengthAdjust="spacingAndGlyphs">new</text>
<text x="72.6" y="100.3" font-family="'Liberation Sans',sans-serif" font-size="50.5" fill="#fff" stroke="#fff" stroke-width="0.3" textLength="58" lengthAdjust="spacingAndGlyphs">87</text>
</svg>
<div class="b" style="left:1015px;top:393px;width:9px;height:112px;background:#f1f1f1;"></div>
<div class="b" style="left:1017px;top:402.8px;width:5.6px;height:40px;background:#c1c1c1;"></div>
<svg style="left:1017.5px;top:396px" width="4.4" height="2.6" viewBox="0 0 4.4 2.6"><path d="M0 2.5 L2.2 0.1 L4.4 2.5Z" fill="#a3a3a3"/></svg>
<svg style="left:1017.5px;top:499px" width="4.4" height="2.6" viewBox="0 0 4.4 2.6"><path d="M0 0.1 L2.2 2.5 L4.4 0.1Z" fill="#505050"/></svg>
<div class="b" style="left:571.6px;top:0px;width:0.6px;height:505px;background:#e6e7e9;"></div>
</div></body></html>
